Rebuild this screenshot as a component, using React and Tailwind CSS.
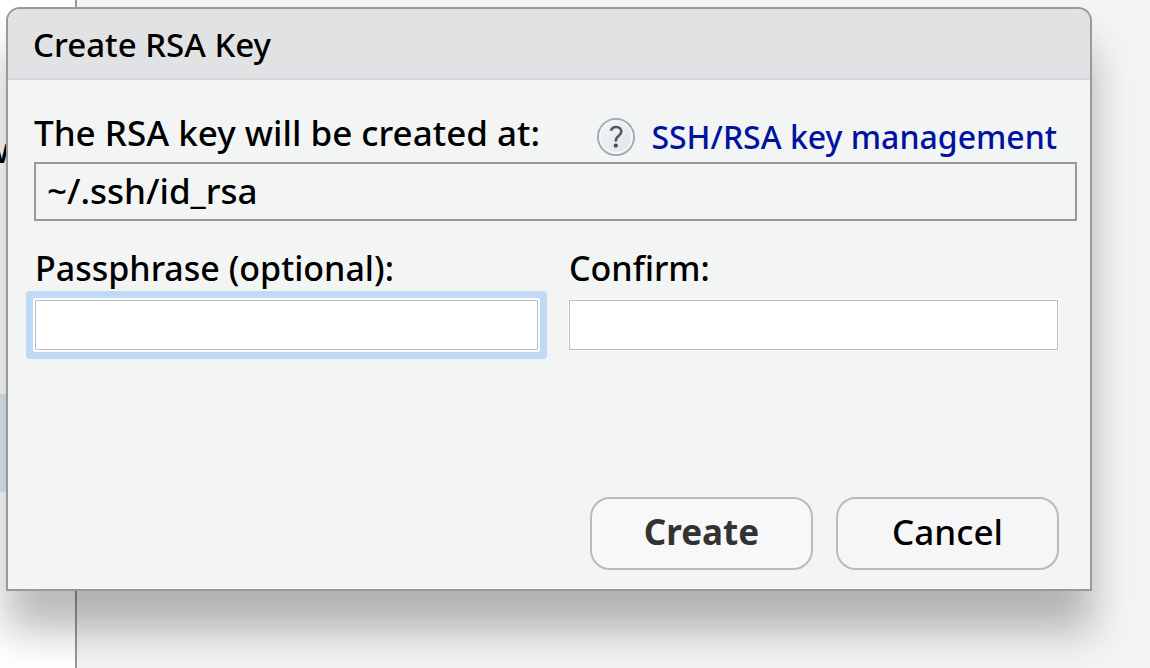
import React from 'react';

function HelpIcon() {
  return (
    <svg width="38" height="38" viewBox="0 0 38 38" aria-hidden="true" className="shrink-0">
      <defs>
        <linearGradient id="help-fill" x1="0" y1="0" x2="1" y2="1">
          <stop offset="0" stopColor="#f4f6f8" />
          <stop offset="1" stopColor="#dfe4e9" />
        </linearGradient>
      </defs>
      <circle cx="19" cy="19" r="18" fill="#e5e9ee" stroke="#a3adb4" strokeWidth="2" />
      <circle cx="19" cy="19" r="16" fill="url(#help-fill)" stroke="#f3f5f7" strokeWidth="2" />
      <path
        d="M14 12.8C14.6 10.2 16.4 9 19 9C22.2 9 24.3 10.9 24.3 13.5C24.3 15.6 23.2 16.8 21.6 18C19.8 19.3 18.8 20.3 18.8 22.8V23.6"
        fill="none"
        stroke="#4d5960"
        strokeWidth="2.6"
      />
      <circle cx="18.8" cy="27.6" r="2.1" fill="#3f4a52" />
    </svg>
  );
}

function Backdrop() {
  return (
    <div className="flex min-h-screen">
      <div className="w-[77px] shrink-0 overflow-hidden border-r-2 border-[#999999] bg-white pt-[126px]">
        <div className="-ml-[18px] h-[268px] text-[34px] leading-[48px]">w</div>
        <div className="h-[98px] bg-[#dcebf7]" />
      </div>
      <div className="flex-1 bg-[#f3f5f4]" />
    </div>
  );
}

const fieldClass =
  'block h-[50px] w-full border border-[#bcbcbc] bg-white px-3 text-[34px] leading-[48px] outline-none';
const fieldLabelClass = 'mb-2 block text-[34px] leading-[48px] whitespace-nowrap';
const buttonClass =
  'h-[73px] w-[223px] rounded-[20px] border-2 border-[#bababa] pb-1 text-[35px] leading-[48px]';

export default function App() {
  return (
    <div className="relative min-h-screen font-['Noto_Sans',sans-serif] font-medium text-black">
      <Backdrop />
      <div
        role="dialog"
        aria-labelledby="dialog-title"
        className="absolute inset-x-0 top-[7px] mr-[58px] ml-[6px] rounded-t-[14px] border-2 border-[#999999] bg-[#f3f5f4] shadow-[0_40px_42px_rgba(0,0,0,0.27)]"
      >
        <h1
          id="dialog-title"
          className="rounded-t-[12px] border-b-2 border-[#d6d8de] bg-[#e1e2e4] px-[25px] pt-3 pb-[9px] text-[33px] leading-[48px] font-medium"
        >
          Create RSA Key
        </h1>
        <form className="pt-[29px] pr-[13px] pb-[19px] pl-[26px]" onSubmit={(e) => e.preventDefault()}>
          <div className="flex items-center justify-between pr-5 pb-[5px]">
            <label htmlFor="key-path" className="text-[35px] leading-[48px] whitespace-nowrap">
              The RSA key will be created at:
            </label>
            <a href="#help" className="-mb-1 flex items-center gap-4 pt-1 text-[32px] leading-[44px] whitespace-nowrap text-[#0013a0]">
              <HelpIcon />
              SSH/RSA key management
            </a>
          </div>
          <input
            id="key-path"
            readOnly
            defaultValue="~/.ssh/id_rsa"
            className="block h-[59px] w-full border-2 border-[#999999] bg-transparent px-[11px] pb-[2px] text-[35px] leading-[48px] outline-none"
          />
          <div className="flex gap-[31px] pt-[23px] pr-[19px] pl-px">
            <div className="flex-[503_1_0%]">
              <label htmlFor="passphrase" className={fieldLabelClass}>
                Passphrase (optional):
              </label>
              <input
                id="passphrase"
                type="password"
                className={`${fieldClass} rounded-[1px] shadow-[0_0_0_2px_#ffffff,0_0_0_9px_#bfd9f7]`}
              />
            </div>
            <div className="flex-[489_1_0%]">
              <label htmlFor="confirm" className={fieldLabelClass}>
                Confirm:
              </label>
              <input id="confirm" type="password" className={`${fieldClass} shadow-[0_0_0_1px_#fbfbfb]`} />
            </div>
          </div>
          <div className="flex justify-end gap-[23px] pt-[147px] pr-[18px]">
            <button type="submit" className={`${buttonClass} bg-[#f8f8f8] font-bold text-[#333333]`}>
              Create
            </button>
            <button type="button" className={`${buttonClass} bg-[#f6f6f9] font-medium`}>
              Cancel
            </button>
          </div>
        </form>
      </div>
    </div>
  );
}
